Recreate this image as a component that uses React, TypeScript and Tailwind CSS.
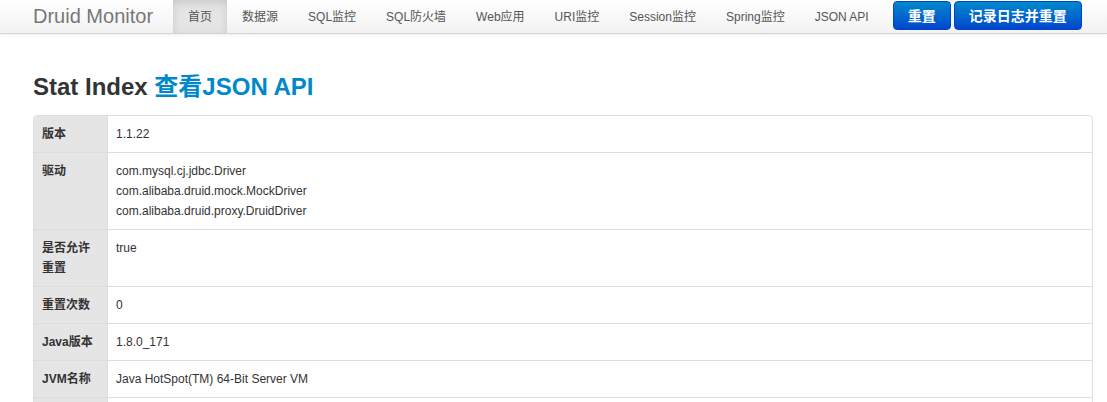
import React from "react";

const navItems = ["首页", "数据源", "SQL监控", "SQL防火墙", "Web应用", "URI监控", "Session监控", "Spring监控", "JSON API"];

const rows: { k: string; v: string[] }[] = [
  { k: "版本", v: ["1.1.22"] },
  { k: "驱动", v: ["com.mysql.cj.jdbc.Driver", "com.alibaba.druid.mock.MockDriver", "com.alibaba.druid.proxy.DruidDriver"] },
  { k: "是否允许重置", v: ["true"] },
  { k: "重置次数", v: ["0"] },
  { k: "Java版本", v: ["1.8.0_171"] },
  { k: "JVM名称", v: ["Java HotSpot(TM) 64-Bit Server VM"] },
  { k: "JVM厂商", v: ["Oracle Corporation"] },
];

export default function App() {
  return (
    <div className="min-h-[402px] bg-white text-[#333] text-[12px] leading-[20px]" style={{ fontFamily: '"Liberation Sans", Arial, "Noto Sans CJK SC", sans-serif' }}>
      <div className="h-[34px] flex items-stretch bg-gradient-to-b from-white to-[#f2f2f2] border-b border-[#d4d4d4] shadow-[0_1px_4px_rgba(0,0,0,0.065)]">
        <div className="pl-[33px] pr-[20px] flex items-center text-[20px] text-[#777] leading-[33px]">Druid Monitor</div>
        <div className="flex items-stretch">
          {navItems.map((n, i) => (
            <div key={n} className={`px-[15px] flex items-center text-[12px] text-[#555] ${i === 0 ? "bg-[#e5e5e5] shadow-[inset_0_3px_8px_rgba(0,0,0,0.125)]" : ""}`}>{n}</div>
          ))}
        </div>
        <div className="flex items-start pt-[1px] ml-[9px] gap-[3px]">
          <div className="h-[29px] px-[14px] flex items-center rounded-[4px] border border-[#0044cc] bg-gradient-to-b from-[#0088cc] to-[#0044cc] text-white text-[14px] font-bold">重置</div>
          <div className="h-[29px] px-[14px] flex items-center rounded-[4px] border border-[#0044cc] bg-gradient-to-b from-[#0088cc] to-[#0044cc] text-white text-[14px] font-bold">记录日志并重置</div>
        </div>
      </div>
      <div className="pl-[33px] pr-[14px]">
        <h2 className="mt-[38px] mb-[13px] text-[24px] leading-[30px] font-bold text-[#333]">
          Stat Index <span className="text-[#0088cc]">查看JSON API</span>
        </h2>
        <table className="w-full border-separate border-spacing-0 border border-[#ddd] rounded-[4px]">
          <tbody>
            {rows.map((r, i) => (
              <tr key={r.k}>
                <td className={`w-[73px] px-[8px] py-[8px] align-top font-bold bg-[#e5e5e5] ${i > 0 ? "border-t border-[#ddd]" : ""} ${i === 0 ? "rounded-tl-[4px]" : ""}`}>{r.k}</td>
                <td className={`px-[8px] py-[8px] align-top border-l border-[#ddd] ${i > 0 ? "border-t border-[#ddd]" : ""}`}>
                  {r.v.map((l) => (
                    <div key={l}>{l}</div>
                  ))}
                </td>
              </tr>
            ))}
          </tbody>
        </table>
      </div>
    </div>
  );
}
